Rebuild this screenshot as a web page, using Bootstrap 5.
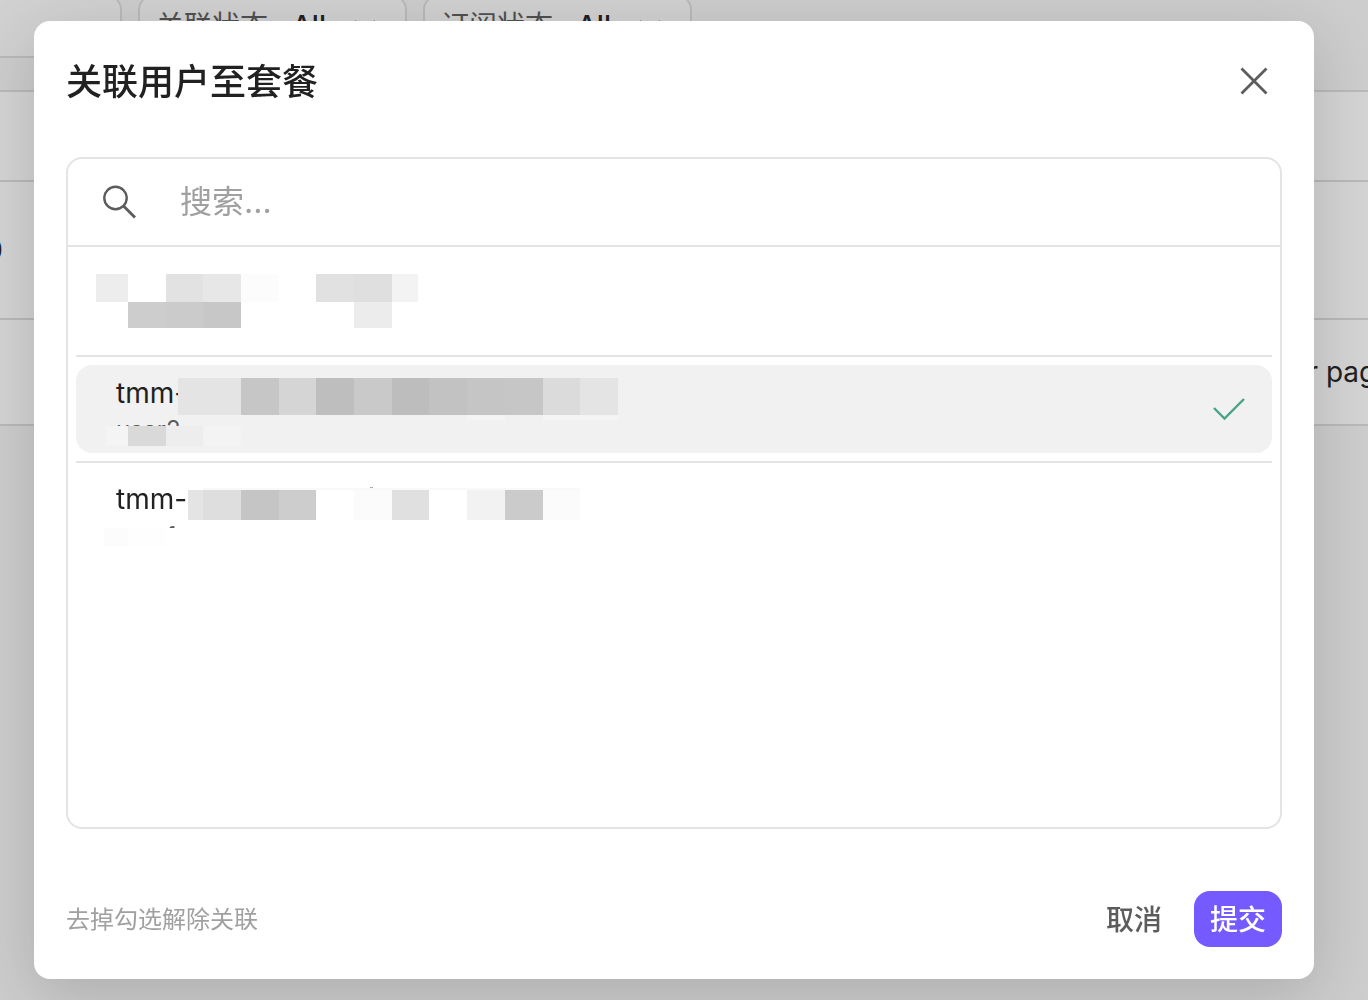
<!DOCTYPE html>
<html lang="zh-CN">
<head>
<meta charset="utf-8">
<meta name="viewport" content="width=device-width, initial-scale=1">
<title>关联用户至套餐</title>
<link href="https://cdn.jsdelivr.net/npm/bootstrap@5.3.0/dist/css/bootstrap.min.css" rel="stylesheet">
<style>
body{font-family:Inter,"Noto Sans CJK SC",sans-serif;font-size:28px;line-height:40px;color:#212121;background:#cdcdcd;overflow:hidden}
svg{display:block;flex:none}
.filters{margin-top:-6px;height:64px;gap:16px}
.filter-chip{height:64px;padding:0 16px;border:2px solid #b9b9b9;border-radius:16px;background:#d1d1d1;color:#505050;font-size:28px}
.filter-first{width:122px;border-left:0;border-radius:0 16px 16px 0}
.filter-next{width:269px}
.filter-value{margin-left:24px;font-weight:500;color:#212121}
.plans{margin-top:32px;background:#d4d4d4}
.plans>div{border-top:2px solid #b9b9b9}
.plans>div:last-child{border-bottom:2px solid #b9b9b9}
.row-head{height:90px}
.row-plan{height:138px}
.row-pager{height:108px}
.cell-count{width:3px}
.cell-pager{width:94px}
.overlay{padding:21px 54px 21px 34px}
.dialog{border-radius:16px;background:#fff;padding:0 32px 32px;box-shadow:0 16px 64px rgba(0,0,0,.16)}
.dialog-head{height:120px}
.dialog-title{font-size:36px;line-height:48px;font-weight:500;padding-top:2px}
.close-btn{width:56px;height:56px;color:#5c5c5c}
.picker{margin-top:16px;border:2px solid #e4e4e4;border-radius:16px}
.search-row{height:88px;border-bottom:2px solid #e4e4e4;padding:0 32px}
.search-input{margin-left:44px;font-size:32px;line-height:48px;color:#212121;outline:0}
.search-input::placeholder{color:#a0a0a0;opacity:1}
.users{padding:12px 8px 8px}
.user-item{height:88px;border-radius:16px;padding:8px 24px 6px 40px;color:#212121}
.user-item.chosen{background:#f1f1f1}
.user-name{font-size:28px;line-height:40px}
.user-id{font-size:24px;line-height:34px;color:#5c5c5c}
.divider{height:2px;margin:8px 0;background:#e4e4e4}
.mosaic{left:0;top:0}
.dialog-foot{margin-top:62px}
.hint{font-size:24px;color:#a0a0a0;padding-top:2px}
.foot-btn{height:56px;padding:2px 16px 0;border-radius:16px;font-size:28px;line-height:40px;font-weight:500}
.cancel-btn{color:#5c5c5c}
.submit-btn{background:#755bff;color:#fff}
</style>
</head>
<body class="vh-100">
<main>
  <div class="filters d-flex">
    <div class="filter-chip filter-first"></div>
    <button type="button" class="filter-chip filter-next d-flex align-items-center text-nowrap"><span>关联状态</span><span class="filter-value">All</span>
      <svg class="ms-auto me-2" width="32" height="32" viewBox="0 0 32 32" fill="none" stroke="#505050" stroke-width="2"><path d="M6 11l10 10 10-10"/></svg></button>
    <button type="button" class="filter-chip filter-next d-flex align-items-center text-nowrap"><span>订阅状态</span><span class="filter-value">All</span>
      <svg class="ms-auto me-2" width="32" height="32" viewBox="0 0 32 32" fill="none" stroke="#505050" stroke-width="2"><path d="M6 11l10 10 10-10"/></svg></button>
  </div>
  <div class="plans">
    <div class="row-head"></div>
    <div class="row-plan d-flex align-items-center"><div class="cell-count d-flex justify-content-end">0</div></div>
    <div class="row-pager d-flex align-items-center justify-content-end"><div class="cell-pager text-nowrap">per page</div></div>
  </div>
</main>

<div class="overlay position-fixed top-0 start-0 w-100 h-100 d-flex">
  <section class="dialog w-100 d-flex flex-column" role="dialog" aria-modal="true" aria-labelledby="dialog-title">
    <header class="dialog-head d-flex align-items-center justify-content-between">
      <h1 class="dialog-title m-0" id="dialog-title">关联用户至套餐</h1>
      <button type="button" class="close-btn btn p-0 border-0 d-flex align-items-center justify-content-center" aria-label="关闭">
        <svg width="28" height="28" viewBox="0 0 28 28" fill="none" stroke="currentColor" stroke-width="2.8"><path d="M1.500 1.500l25 25M26.500 1.500l-25 25"/></svg>
      </button>
    </header>

    <div class="picker flex-grow-1 d-flex flex-column">
      <label class="search-row d-flex align-items-center">
        <svg width="36" height="36" viewBox="0 0 36 36" fill="none" stroke="#5c5c5c" stroke-width="2.400"><circle cx="15.500" cy="14" r="11.200"/><path d="M23.500 22L35 33.500" stroke-width="2.800"/></svg>
        <input type="text" class="search-input flex-grow-1 border-0 p-0 bg-transparent" placeholder="搜索..." aria-label="搜索">
      </label>
      <ul class="users list-unstyled m-0">
        <li class="user-item position-relative">
          <svg class="mosaic position-absolute" width="560" height="88" viewBox="76 259 560 88" shape-rendering="crispEdges">
            <path fill="#ededed" d="M96 274h32v28h-32z"/><path fill="#e2e2e2" d="M166 274h37v28h-37z"/><path fill="#e7e7e7" d="M203 274h38v28h-38z"/><path fill="#fcfcfc" d="M241 274h38v28h-38z"/>
            <path fill="#e1e1e1" d="M316 274h38v28h-38z"/><path fill="#dfdfdf" d="M354 274h38v28h-38z"/><path fill="#f3f3f3" d="M392 274h26v28h-26z"/>
            <path fill="#cdcdcd" d="M128 302h38v26h-38z"/><path fill="#cbcbcb" d="M166 302h37v26h-37z"/><path fill="#c7c7c7" d="M203 302h38v26h-38z"/><path fill="#ececec" d="M354 302h38v26h-38z"/>
          </svg>
        </li>
        <li class="divider" role="separator"></li>
        <li class="user-item chosen position-relative d-flex align-items-center justify-content-between">
          <div><div class="user-name">tmm-</div><div class="user-id">user2</div></div>
          <svg width="40" height="32" viewBox="0 0 40 32" fill="none" stroke="#47a488" stroke-width="2.400"><path d="M6 14l10.500 10.500L36 5"/></svg>
          <svg class="mosaic position-absolute" width="560" height="88" viewBox="76 365 560 88" shape-rendering="crispEdges">
            <path fill="#f1f1f1" d="M106 426h135v22H106z"/>
            <path fill="#e4e4e4" d="M178 378h63v37h-63z"/><path fill="#c6c6c6" d="M241 378h38v37h-38z"/><path fill="#d5d5d5" d="M279 378h37v37h-37z"/><path fill="#bebebe" d="M316 378h38v37h-38z"/>
            <path fill="#c9c9c9" d="M354 378h38v37h-38z"/><path fill="#bdbdbd" d="M392 378h37v37h-37z"/><path fill="#c2c2c2" d="M429 378h38v37h-38z"/><path fill="#c5c5c5" d="M467 378h38v37h-38z"/>
            <path fill="#c6c6c6" d="M505 378h38v37h-38z"/><path fill="#dbdbdb" d="M543 378h37v37h-37z"/><path fill="#e4e4e4" d="M580 378h38v37h-38z"/>
            <path fill="#f4f4f4" d="M467 415h38v5h-38zM543 415h75v5h-75zM106 426h22v20h-22z"/>
            <path fill="#d9d9d9" d="M128 426h38v20h-38z"/><path fill="#ededed" d="M166 426h37v20h-37z"/><path fill="#f3f3f3" d="M203 426h38v20h-38z"/>
          </svg>
        </li>
        <li class="divider" role="separator"></li>
        <li class="user-item position-relative">
          <div class="user-name">tmm-</div><div class="user-id">userf</div>
          <svg class="mosaic position-absolute" width="560" height="88" viewBox="76 471 560 88" shape-rendering="crispEdges">
            <path fill="#fff" d="M104 528h137v26H104z"/>
            <path fill="#f9f9f9" d="M203 488h377v2H203z"/><path fill="#aaa" d="M370 487h3v1h-3z"/>
            <path fill="#e4e4e4" d="M188 490h15v30h-15z"/><path fill="#dedede" d="M203 490h38v30h-38z"/><path fill="#c5c5c5" d="M241 490h38v30h-38z"/><path fill="#cdcdcd" d="M279 490h37v30h-37z"/>
            <path fill="#fbfbfb" d="M354 490h38v30h-38zM543 490h37v30h-37z"/><path fill="#e0e0e0" d="M392 490h37v30h-37z"/><path fill="#f2f2f2" d="M467 490h38v30h-38z"/><path fill="#cbcbcb" d="M505 490h38v30h-38z"/>
            <path fill="#fcfcfc" d="M104 528h24v19h-24z"/><path fill="#fefefe" d="M128 528h38v19h-38z"/>
          </svg>
        </li>
      </ul>
    </div>

    <footer class="dialog-foot d-flex align-items-center justify-content-between">
      <span class="hint">去掉勾选解除关联</span>
      <div class="d-flex gap-3">
        <button type="button" class="foot-btn cancel-btn btn border-0">取消</button>
        <button type="button" class="foot-btn submit-btn btn border-0">提交</button>
      </div>
    </footer>
  </section>
</div>
<script src="https://cdn.jsdelivr.net/npm/bootstrap@5.3.0/dist/js/bootstrap.bundle.min.js"></script>
</body>
</html>
